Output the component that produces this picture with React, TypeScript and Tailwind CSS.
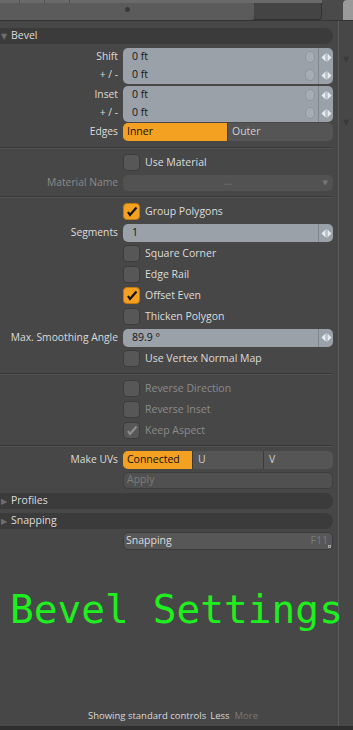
import React from 'react';

const font = { fontFamily: '"Open Sans", "DejaVu Sans", sans-serif' };

const Arrows = () => (
  <div className="flex h-full w-[15px] items-center justify-center border-l border-[#7f868e]">
    <svg width="11" height="9" viewBox="0 0 11 9">
      <path d="M4.5 0.5 L0.5 4.5 L4.5 8.5 Z" fill="#e8ecf0" />
      <path d="M6.5 0.5 L10.5 4.5 L6.5 8.5 Z" fill="#e8ecf0" />
      <rect x="5" y="0" width="1" height="9" fill="#b9c0c7" />
    </svg>
  </div>
);

const ResetDot = () => (
  <div className="mr-[3px] h-[12px] w-[10px] rounded-full border border-[#8e959d] bg-[#a6adb4]" />
);

const FieldRow = ({ value, reset = true }: { value: string; reset?: boolean }) => (
  <div className="flex h-[18px] items-center">
    <span className="flex-1 pl-[9px] text-[10.5px] text-[#151515]">{value}</span>
    {reset && <ResetDot />}
    <Arrows />
  </div>
);

const Label = ({ children, dim }: { children?: React.ReactNode; dim?: boolean }) => (
  <div
    className={`w-[123px] shrink-0 whitespace-nowrap pr-[5px] text-right text-[10.3px] ${
      dim ? 'text-[#8b8b8b]' : 'text-[#dcdcdc]'
    }`}
  >
    {children}
  </div>
);

const Check = ({ on, dim }: { on?: boolean; dim?: boolean }) => {
  const orange = on && !dim;
  return (
    <div
      className={`flex h-[17px] w-[17px] items-center justify-center rounded-[4px] border ${
        orange ? 'border-[#c07a10] bg-[#f4a020]' : 'border-[#3c3c3c] bg-[#575757]'
      }`}
    >
      {on && (
        <svg width="12" height="11" viewBox="0 0 12 11">
          <path d="M2 6 L4 9 L10.5 1.5" stroke={dim ? '#8e8e8e' : '#111'} strokeWidth="2.2" fill="none" />
        </svg>
      )}
    </div>
  );
};

const CheckRow = ({ text, on, dim }: { text: string; on?: boolean; dim?: boolean }) => (
  <div className="flex h-[21px] items-center">
    <Label />
    <Check on={on} dim={dim} />
    <span className={`ml-[5px] text-[10.5px] ${dim ? 'text-[#8b8b8b]' : 'text-[#dcdcdc]'}`}>{text}</span>
  </div>
);

const Header = ({ text, open }: { text: string; open?: boolean }) => (
  <div className="mr-[5px] flex h-[16px] items-center rounded-r-[8px] bg-[#3b3b3b] pl-[1px]">
    <span className="w-[10px] text-[8px] text-[#6e6e6e]">{open ? '▼' : '▶'}</span>
    <span className="text-[10.5px] text-[#dcdcdc]">{text}</span>
  </div>
);

const Sep = () => <div className="my-[4px] mr-[5px] h-px bg-[#393939] shadow-[0_1px_0_#525252]" />;

export default function App() {
  return (
    <div className="flex h-[730px] w-[353px] flex-col overflow-hidden bg-[#474747]" style={font}>
      {/* top strip */}
      <div className="flex h-[21px] shrink-0 border-b border-[#353535]">
        <div className="flex w-[322px] flex-col">
          <div className="flex h-[3px] bg-[#6a6a6a]">
            <div className="w-[20px] border-r border-[#505050]" />
            <div className="w-[25px] border-r border-[#505050]" />
            <div className="w-[25px] border-r border-[#505050]" />
          </div>
          <div className="flex flex-1">
            <div className="flex w-[254px] items-center justify-center rounded-br-[4px] bg-[#5b5b5b] pb-[4px]">
              <div className="h-[5px] w-[5px] rounded-full bg-[#3a3a3a]" />
            </div>
            <div className="flex-1 rounded-br-[4px] border-r border-b border-[#333] bg-[#444]" />
          </div>
        </div>
        <div className="w-[21px] bg-[#4a4a4a]" />
        <div className="flex-1 rounded-tl-[4px] bg-[#9a9a9a]" />
      </div>

      <div className="flex flex-1">
        <div className="flex w-[338px] flex-col pt-[7px]">
          <Header text="Bevel" open />

          <div className="mt-[4px] flex">
            <div className="flex flex-col">
              <div className="flex h-[18px] items-center"><Label>Shift</Label></div>
              <div className="flex h-[18px] items-center"><Label>+ / -</Label></div>
            </div>
            <div className="mr-[5px] flex-1 overflow-hidden rounded-[5px] bg-[#9aa1a9]">
              <FieldRow value="0 ft" />
              <FieldRow value="0 ft" />
            </div>
          </div>

          <div className="mt-[2px] flex">
            <div className="flex flex-col">
              <div className="flex h-[18px] items-center"><Label>Inset</Label></div>
              <div className="flex h-[18px] items-center"><Label>+ / -</Label></div>
            </div>
            <div className="mr-[5px] flex-1 overflow-hidden rounded-[5px] bg-[#9aa1a9]">
              <FieldRow value="0 ft" />
              <FieldRow value="0 ft" />
            </div>
          </div>

          <div className="mt-[1px] flex h-[18px] items-center">
            <Label>Edges</Label>
            <div className="mr-[5px] flex h-[18px] flex-1 overflow-hidden rounded-[5px] bg-[#555] text-[10.5px]">
              <div className="flex w-[104px] items-center bg-[#f4a020] pl-[4px] text-[#111]">Inner</div>
              <div className="flex flex-1 items-center border-l border-[#3c3c3c] pl-[4px] text-[#cfcfcf]">Outer</div>
            </div>
          </div>

          <div className="mt-[2px]"><Sep /></div>

          <CheckRow text="Use Material" />
          <div className="mt-[1px] flex h-[18px] items-center">
            <Label dim>Material Name</Label>
            <div className="relative mr-[5px] flex h-[16px] flex-1 items-center justify-center rounded-[5px] bg-[#525252] text-[11px] text-[#7a7a7a]">
              <span className="-mt-[3px]">...</span>
              <span className="absolute right-[5px] text-[7px] text-[#777]">▼</span>
            </div>
          </div>

          <Sep />

          <CheckRow text="Group Polygons" on />
          <div className="mt-[1px] flex h-[20px] items-center">
            <Label>Segments</Label>
            <div className="mr-[5px] flex-1 overflow-hidden rounded-[5px] bg-[#9aa1a9]">
              <FieldRow value="1" reset={false} />
            </div>
          </div>
          <CheckRow text="Square Corner" />
          <CheckRow text="Edge Rail" />
          <CheckRow text="Offset Even" on />
          <CheckRow text="Thicken Polygon" />
          <div className="flex h-[21px] items-center">
            <Label>Max. Smoothing Angle</Label>
            <div className="mr-[5px] flex-1 overflow-hidden rounded-[5px] bg-[#9aa1a9]">
              <FieldRow value="89.9 °" reset={false} />
            </div>
          </div>
          <CheckRow text="Use Vertex Normal Map" />

          <Sep />

          <div>
            <CheckRow text="Reverse Direction" dim />
            <CheckRow text="Reverse Inset" dim />
            <CheckRow text="Keep Aspect" on dim />
          </div>

          <Sep />

          <div className="mt-[1px] flex h-[18px] items-center">
            <Label>Make UVs</Label>
            <div className="mr-[5px] flex h-[18px] flex-1 overflow-hidden rounded-[5px] bg-[#555] text-[10.5px]">
              <div className="flex w-[69px] items-center bg-[#f4a020] pl-[4px] text-[#111]">Connected</div>
              <div className="flex w-[71px] items-center border-l border-[#3c3c3c] pl-[5px] text-[#cfcfcf]">U</div>
              <div className="flex flex-1 items-center border-l border-[#3c3c3c] pl-[5px] text-[#cfcfcf]">V</div>
            </div>
          </div>
          <div className="mt-[2px] flex h-[18px] items-center">
            <Label />
            <div className="mr-[5px] flex h-[17px] flex-1 items-center rounded-[5px] border border-[#3e3e3e] bg-[#505050] pl-[3px] text-[10.5px] text-[#7c7c7c]">
              Apply
            </div>
          </div>

          <div className="mt-[4px]"><Header text="Profiles" /></div>
          <div className="mt-[4px]"><Header text="Snapping" /></div>

          <div className="mt-[2px] flex h-[19px] items-center">
            <Label />
            <div className="relative mr-[5px] flex h-[18px] flex-1 items-center justify-between rounded-[5px] border border-[#3a3a3a] bg-[#575757] px-[2px] text-[10.5px]">
              <span className="text-[#dcdcdc]">Snapping</span>
              <span className="pr-[2px] text-[#7a7a7a]">F11</span>
              <span className="absolute bottom-[1px] right-[1px] h-[3px] w-[3px] border border-[#aaa]" />
            </div>
          </div>

          <div
            className="relative z-10 mt-[37px] whitespace-nowrap pl-[10px] text-[39.5px] leading-[44px] text-[#1eef1e]"
            style={{ fontFamily: '"DejaVu Sans Mono", monospace' }}
          >
            Bevel Settings
          </div>

          <div className="flex-1" />
          <div className="mb-[3px] flex justify-center pl-[8px] text-[9.5px]">
            <span className="text-[#d8d8d8]">Showing standard controls</span>
            <span className="ml-[4px] text-[#d8d8d8]">Less</span>
            <span className="ml-[5px] text-[#777]">More</span>
          </div>
        </div>

        <div className="w-px bg-[#5c5c5c]" />
        <div className="flex flex-1 flex-col items-center pt-[33px] text-[8px] leading-[10px] text-[#3a3a3a]">
          <span>▼</span>
          <span className="mt-[53px]">▼</span>
        </div>
      </div>
      <div className="h-[4px] bg-[#2e2e2e]" />
    </div>
  );
}
